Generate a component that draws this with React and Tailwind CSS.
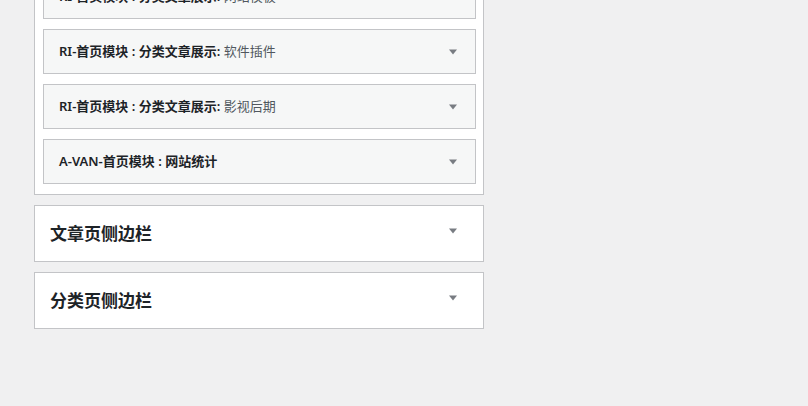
import React from 'react';

const font = { fontFamily: '"Noto Sans", "Noto Sans CJK SC", sans-serif' };

const widgets = [
    { name: 'RI-首页模块 : 分类文章展示:', sub: '网站模板' },
    { name: 'RI-首页模块 : 分类文章展示:', sub: '软件插件' },
    { name: 'RI-首页模块 : 分类文章展示:', sub: '影视后期' },
    { name: 'A-VAN-首页模块 : 网站统计', sub: '' },
];

const Arrow = () => (
    <svg width="10" height="6" viewBox="0 0 10 6" className="shrink-0">
        <path d="M1 0.5h8L5 5.5z" fill="#787c82" />
    </svg>
);

const Widget = ({ name, sub }) => (
    <div className="h-[45px] border border-[#c3c4c7] bg-[#f6f7f7] flex items-center pl-[15px] pr-[17px]">
        <h3 className="text-[13px] font-semibold text-[#1d2327] leading-none">
            {name}
            {sub && <span className="font-normal text-[#50575e]"> {sub}</span>}
        </h3>
        <div className="ml-auto"><Arrow /></div>
    </div>
);

const Sidebar = ({ title }) => (
    <div className="h-[57px] border border-[#c3c4c7] bg-white flex items-center pl-[15px] pr-[25px]">
        <h2 className="text-[17px] font-bold text-[#1d2327] leading-none">{title}</h2>
        <div className="ml-auto -mt-[6px]"><Arrow /></div>
    </div>
);

const App = () => {
    return (
        <div className="w-full h-[406px] bg-[#f0f0f1] overflow-hidden pl-[34px]" style={font}>
            <div className="w-[450px] -mt-[37px] flex flex-col gap-[10px]">
                <div className="border border-[#c3c4c7] bg-white pl-2 pr-[7px] py-[10px] flex flex-col gap-[10px]">
                    {widgets.map((w, i) => (
                        <Widget key={i} name={w.name} sub={w.sub} />
                    ))}
                </div>
                <Sidebar title="文章页侧边栏" />
                <Sidebar title="分类页侧边栏" />
            </div>
        </div>
    );
};

export default App;
